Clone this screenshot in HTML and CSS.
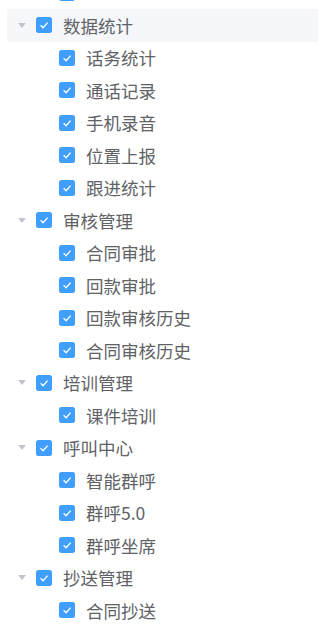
FILE: index.html
```html
<!DOCTYPE html>
<html lang="zh-CN">
<head>
<meta charset="utf-8">
<title>权限树</title>
<link rel="stylesheet" href="styles.css">
</head>
<body>
<div class="tree">
  <div class="row lvl2">
    <span class="cb"><svg viewBox="0 0 16 16"><polyline points="4.6,8.2 7.1,10.7 11.6,5.6"/></svg></span>
    <span class="label"></span>
  </div>

  <div class="node">
    <div class="row lvl1 current">
      <span class="caret"></span>
      <span class="cb"><svg viewBox="0 0 16 16"><polyline points="4.6,8.2 7.1,10.7 11.6,5.6"/></svg></span>
      <span class="label">数据统计</span>
    </div>
    <div class="children">
      <div class="row lvl2"><span class="cb"><svg viewBox="0 0 16 16"><polyline points="4.6,8.2 7.1,10.7 11.6,5.6"/></svg></span><span class="label">话务统计</span></div>
      <div class="row lvl2"><span class="cb"><svg viewBox="0 0 16 16"><polyline points="4.6,8.2 7.1,10.7 11.6,5.6"/></svg></span><span class="label">通话记录</span></div>
      <div class="row lvl2"><span class="cb"><svg viewBox="0 0 16 16"><polyline points="4.6,8.2 7.1,10.7 11.6,5.6"/></svg></span><span class="label">手机录音</span></div>
      <div class="row lvl2"><span class="cb"><svg viewBox="0 0 16 16"><polyline points="4.6,8.2 7.1,10.7 11.6,5.6"/></svg></span><span class="label">位置上报</span></div>
      <div class="row lvl2"><span class="cb"><svg viewBox="0 0 16 16"><polyline points="4.6,8.2 7.1,10.7 11.6,5.6"/></svg></span><span class="label">跟进统计</span></div>
    </div>
  </div>

  <div class="node">
    <div class="row lvl1">
      <span class="caret"></span>
      <span class="cb"><svg viewBox="0 0 16 16"><polyline points="4.6,8.2 7.1,10.7 11.6,5.6"/></svg></span>
      <span class="label">审核管理</span>
    </div>
    <div class="children">
      <div class="row lvl2"><span class="cb"><svg viewBox="0 0 16 16"><polyline points="4.6,8.2 7.1,10.7 11.6,5.6"/></svg></span><span class="label">合同审批</span></div>
      <div class="row lvl2"><span class="cb"><svg viewBox="0 0 16 16"><polyline points="4.6,8.2 7.1,10.7 11.6,5.6"/></svg></span><span class="label">回款审批</span></div>
      <div class="row lvl2"><span class="cb"><svg viewBox="0 0 16 16"><polyline points="4.6,8.2 7.1,10.7 11.6,5.6"/></svg></span><span class="label">回款审核历史</span></div>
      <div class="row lvl2"><span class="cb"><svg viewBox="0 0 16 16"><polyline points="4.6,8.2 7.1,10.7 11.6,5.6"/></svg></span><span class="label">合同审核历史</span></div>
    </div>
  </div>

  <div class="node">
    <div class="row lvl1">
      <span class="caret"></span>
      <span class="cb"><svg viewBox="0 0 16 16"><polyline points="4.6,8.2 7.1,10.7 11.6,5.6"/></svg></span>
      <span class="label">培训管理</span>
    </div>
    <div class="children">
      <div class="row lvl2"><span class="cb"><svg viewBox="0 0 16 16"><polyline points="4.6,8.2 7.1,10.7 11.6,5.6"/></svg></span><span class="label">课件培训</span></div>
    </div>
  </div>

  <div class="node">
    <div class="row lvl1">
      <span class="caret"></span>
      <span class="cb"><svg viewBox="0 0 16 16"><polyline points="4.6,8.2 7.1,10.7 11.6,5.6"/></svg></span>
      <span class="label">呼叫中心</span>
    </div>
    <div class="children">
      <div class="row lvl2"><span class="cb"><svg viewBox="0 0 16 16"><polyline points="4.6,8.2 7.1,10.7 11.6,5.6"/></svg></span><span class="label">智能群呼</span></div>
      <div class="row lvl2"><span class="cb"><svg viewBox="0 0 16 16"><polyline points="4.6,8.2 7.1,10.7 11.6,5.6"/></svg></span><span class="label">群呼5.0</span></div>
      <div class="row lvl2"><span class="cb"><svg viewBox="0 0 16 16"><polyline points="4.6,8.2 7.1,10.7 11.6,5.6"/></svg></span><span class="label">群呼坐席</span></div>
    </div>
  </div>

  <div class="node">
    <div class="row lvl1">
      <span class="caret"></span>
      <span class="cb"><svg viewBox="0 0 16 16"><polyline points="4.6,8.2 7.1,10.7 11.6,5.6"/></svg></span>
      <span class="label">抄送管理</span>
    </div>
    <div class="children">
      <div class="row lvl2"><span class="cb"><svg viewBox="0 0 16 16"><polyline points="4.6,8.2 7.1,10.7 11.6,5.6"/></svg></span><span class="label">合同抄送</span></div>
    </div>
  </div>
</div>
</body>
</html>
```

FILE: styles.css
```css
html, body {
  margin: 0;
  padding: 0;
  background: #ffffff;
  overflow: hidden;
}

body {
  font-family: "Noto Sans CJK SC", "Noto Sans", sans-serif;
  color: #606266;
}

.tree {
  margin: -23.5px 2px 0 7px;
}

.row {
  display: flex;
  align-items: center;
  height: 32.5px;
}

.row.current {
  background: #f5f7fa;
}

.lvl2 {
  padding-left: 52px;
}

.caret {
  display: flex;
  align-items: center;
  justify-content: center;
  width: 29px;
  height: 100%;
}

.caret::before {
  content: "";
  width: 0;
  height: 0;
  margin-left: 1px;
  border-left: 4.5px solid transparent;
  border-right: 4.5px solid transparent;
  border-top: 5.5px solid #c0c4cc;
}

.cb {
  display: flex;
  flex: none;
  width: 16px;
  height: 16px;
  border-radius: 2.5px;
  background: #409eff;
  margin-right: 11px;
}

.cb svg {
  width: 16px;
  height: 16px;
}

.cb polyline {
  fill: none;
  stroke: #ffffff;
  stroke-width: 1.3;
  stroke-linecap: butt;
  stroke-linejoin: miter;
}

.label {
  font-size: 17.5px;
  line-height: 1;
  white-space: nowrap;
}
```
